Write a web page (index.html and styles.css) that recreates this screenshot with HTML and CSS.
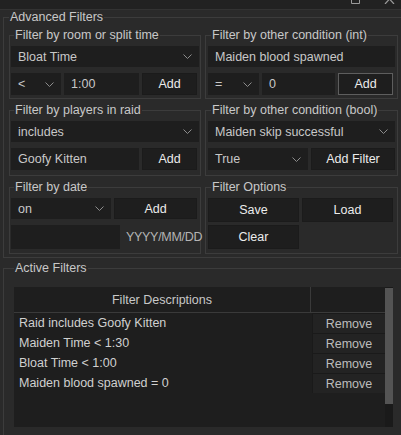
FILE: index.html
```html
<!DOCTYPE html>
<html>
<head>
<meta charset="utf-8">
<link rel="stylesheet" href="styles.css">
</head>
<body>
<div class="titlebar">
  <svg class="ico-box" width="9" height="4" viewBox="0 0 9 4"><path d="M0.5 0 V3.5 H8.5 V0" fill="none" stroke="#9a9a9a" stroke-width="1"/></svg>
  <svg class="ico-x" width="11" height="4" viewBox="0 0 11 4"><path d="M5.5 -1 L1 4 M5.5 -1 L10 4" fill="none" stroke="#9a9a9a" stroke-width="1.2"/></svg>
</div>

<fieldset class="outer top">
  <legend class="outer-legend">Advanced Filters</legend>
  <div class="grid">
    <fieldset class="group left g1">
      <legend class="group-legend">Filter by room or split time</legend>
      <div class="sel h21"><span>Bloat Time</span><svg class="chev" width="9" height="5" viewBox="0 0 9 5"><path d="M0.5 0.5 L4.5 4.5 L8.5 0.5" fill="none" stroke="#8c8c8c"/></svg></div>
      <div class="row">
        <div class="sel w50"><span>&lt;</span><svg class="chev" width="9" height="5" viewBox="0 0 9 5"><path d="M0.5 0.5 L4.5 4.5 L8.5 0.5" fill="none" stroke="#8c8c8c"/></svg></div>
        <div class="inp w75">1:00</div>
        <button class="btn w55">Add</button>
      </div>
    </fieldset>
    <fieldset class="group right g1">
      <legend class="group-legend">Filter by other condition (int)</legend>
      <div class="sel h21"><span>Maiden blood spawned</span></div>
      <div class="row">
        <div class="sel w51"><span>=</span><svg class="chev" width="9" height="5" viewBox="0 0 9 5"><path d="M0.5 0.5 L4.5 4.5 L8.5 0.5" fill="none" stroke="#8c8c8c"/></svg></div>
        <div class="inp w73">0</div>
        <button class="btn w55 focus">Add</button>
      </div>
    </fieldset>

    <fieldset class="group left g2">
      <legend class="group-legend">Filter by players in raid</legend>
      <div class="sel h21"><span>includes</span><svg class="chev" width="9" height="5" viewBox="0 0 9 5"><path d="M0.5 0.5 L4.5 4.5 L8.5 0.5" fill="none" stroke="#8c8c8c"/></svg></div>
      <div class="row">
        <div class="inp w128">Goofy Kitten</div>
        <button class="btn w55">Add</button>
      </div>
    </fieldset>
    <fieldset class="group right g2">
      <legend class="group-legend">Filter by other condition (bool)</legend>
      <div class="sel h21"><span>Maiden skip successful</span><svg class="chev" width="9" height="5" viewBox="0 0 9 5"><path d="M0.5 0.5 L4.5 4.5 L8.5 0.5" fill="none" stroke="#8c8c8c"/></svg></div>
      <div class="row">
        <div class="sel w100"><span>True</span><svg class="chev" width="9" height="5" viewBox="0 0 9 5"><path d="M0.5 0.5 L4.5 4.5 L8.5 0.5" fill="none" stroke="#8c8c8c"/></svg></div>
        <button class="btn w84">Add Filter</button>
      </div>
    </fieldset>

    <fieldset class="group left g3">
      <legend class="group-legend">Filter by date</legend>
      <div class="row">
        <div class="sel w100 h21"><span>on</span><svg class="chev" width="9" height="5" viewBox="0 0 9 5"><path d="M0.5 0.5 L4.5 4.5 L8.5 0.5" fill="none" stroke="#8c8c8c"/></svg></div>
        <button class="btn w83 h21">Add</button>
      </div>
      <div class="row date-row">
        <div class="inp w109 h24"></div>
        <span class="hint">YYYY/MM/DD</span>
      </div>
    </fieldset>
    <fieldset class="group right g3">
      <legend class="group-legend">Filter Options</legend>
      <div class="opts">
        <button class="btn opt">Save</button>
        <button class="btn opt">Load</button>
        <button class="btn opt">Clear</button>
      </div>
    </fieldset>
  </div>
</fieldset>

<fieldset class="outer active">
  <legend class="outer-legend">Active Filters</legend>
  <div class="table">
    <div class="tmain">
      <div class="thead">
        <div class="th1">Filter Descriptions</div>
        <div class="th2"></div>
      </div>
      <div class="trow"><div class="td1">Raid includes Goofy Kitten</div><div class="td2">Remove</div></div>
      <div class="trow"><div class="td1">Maiden Time &lt; 1:30</div><div class="td2">Remove</div></div>
      <div class="trow"><div class="td1">Bloat Time &lt; 1:00</div><div class="td2">Remove</div></div>
      <div class="trow"><div class="td1">Maiden blood spawned = 0</div><div class="td2">Remove</div></div>
    </div>
    <div class="sb"><div class="thumb"></div></div>
  </div>
</fieldset>
</body>
</html>
```

FILE: styles.css
```css
* { box-sizing: border-box; }
html, body { margin: 0; }
body {
  background: #2a2a2a;
  font-family: "Liberation Sans", Arial, sans-serif;
  font-size: 12.5px;
  color: #c8c8c8;
  width: 401px;
  height: 435px;
  overflow: hidden;
}
.titlebar {
  height: 10px;
  background: #222222;
  border-bottom: 1px solid #333333;
  display: flex;
  justify-content: flex-end;
  align-items: flex-start;
  gap: 24px;
  padding-right: 6px;
}
fieldset { min-width: 0; }
.outer {
  margin: 0 0 0 3px;
  width: 400px;
  border: 1px solid #3c3c3c;
}
.top { padding: 4px 0 3px 5px; }
.outer-legend {
  padding: 0 1px;
  margin-left: 0;
  line-height: 14px;
  color: #c8c8c8;
}
.grid {
  display: grid;
  grid-template-columns: 192px 193px;
  column-gap: 4px;
  row-gap: 4px;
}
.group {
  margin: 0;
  border: 1px solid #3c3c3c;
  padding: 4px 1px 4px 1px;
  display: flex;
  flex-direction: column;
  gap: 6px;
}
.group.right { padding-left: 2px; padding-right: 2px; }
.group.g1 { padding-bottom: 3px; }
.group.g2 { padding-bottom: 5px; }
.group-legend {
  padding: 0 1px;
  margin-left: 3px;
  line-height: 14px;
  color: #c8c8c8;
}
.row { display: flex; gap: 3px; align-items: center; }
.sel, .inp {
  height: 22px;
  background: #1e1e1e;
  display: flex;
  align-items: center;
  padding: 0 7px;
  color: #c8c8c8;
  white-space: nowrap;
  flex: none;
}
.sel { justify-content: space-between; }
.group > .sel { width: 100%; }
.btn {
  height: 22px;
  background: #1e1e1e;
  border: 1px solid #1b1b1b;
  color: #ececec;
  font: inherit;
  padding: 0;
  display: flex;
  align-items: center;
  justify-content: center;
  flex: none;
}
.btn.focus { border: 1px solid #5e5e5e; }
.h21 { height: 21px; }
.h24 { height: 24px; }
.w50 { width: 50px; }
.w51 { width: 51px; }
.w55 { width: 55px; }
.w73 { width: 73px; }
.w75 { width: 75px; }
.w83 { width: 83px; }
.w84 { width: 84px; }
.w100 { width: 100px; }
.w109 { width: 109px; }
.w128 { width: 128px; }
.date-row { gap: 6px; }
.hint { color: #b4b4b4; white-space: nowrap; letter-spacing: -0.3px; }
.opts {
  display: grid;
  grid-template-columns: 91px 91px;
  gap: 3px;
}
.opt { width: 91px; height: 24px; }

.active {
  margin: 3px 0 0 3px;
  padding: 12px 5px 0 10px;
  height: 190px;
}
.table {
  width: 379px;
  height: 140px;
  display: flex;
}
.tmain {
  flex: 1;
  background: #1e1e1e;
  display: flex;
  flex-direction: column;
}
.thead {
  height: 26px;
  display: flex;
  border-bottom: 1px solid #3a3a3a;
  flex: none;
}
.th1 {
  width: 297px;
  border-right: 1px solid #3a3a3a;
  display: flex;
  align-items: center;
  justify-content: center;
  color: #c8c8c8;
}
.th2 { flex: 1; }
.trow {
  height: 20px;
  display: flex;
  flex: none;
}
.td1 {
  width: 298px;
  padding-left: 5px;
  display: flex;
  align-items: center;
  color: #d0d0d0;
  white-space: nowrap;
}
.td2 {
  flex: 1;
  background: #232323;
  border-top: 1px solid #1a1a1a;
  border-left: 1px solid #1a1a1a;
  display: flex;
  align-items: center;
  justify-content: center;
  color: #bdbdbd;
}
.sb {
  width: 8px;
  background: #1a1a1a;
  padding-top: 1px;
}
.thumb {
  height: 116px;
  background: #545454;
}
```
